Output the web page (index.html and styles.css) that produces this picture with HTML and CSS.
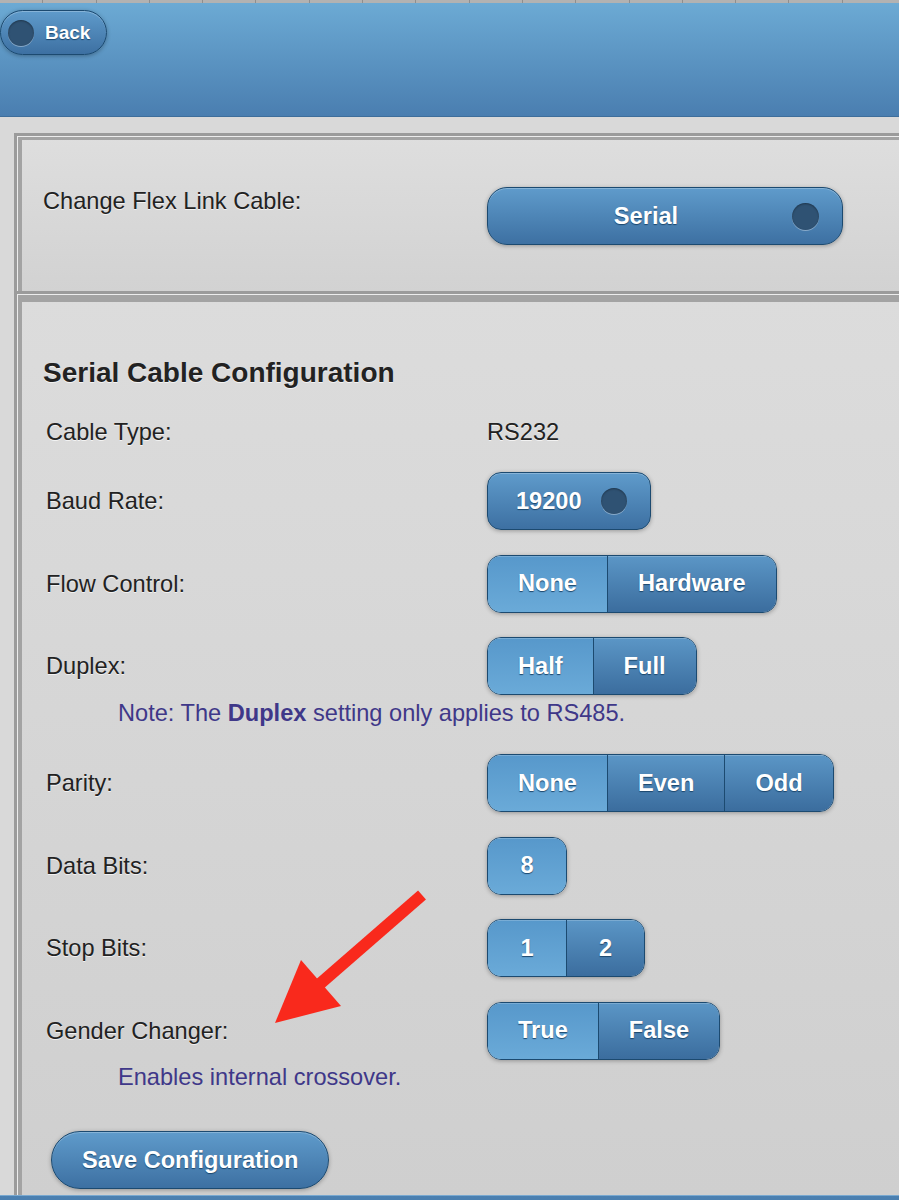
FILE: index.html
```html
<!DOCTYPE html>
<html>
<head>
<meta charset="utf-8">
<title>Serial Cable Configuration</title>
<link rel="stylesheet" href="styles.css">
</head>
<body>
<div class="tabstrip"></div>
<header class="topbar">
  <a class="btn back-btn"><span class="dot"></span><span>Back</span></a>
</header>
<main class="content">
  <section class="panel panel-cable">
    <div class="form-row">
      <span class="label">Change Flex Link Cable:</span>
      <a class="btn select-btn cable-select"><span class="select-text">Serial</span><span class="dot big"></span></a>
    </div>
  </section>
  <section class="panel panel-serial">
    <h2 class="cfg-title">Serial Cable Configuration</h2>
    <div class="field text-field"><span class="label">Cable Type:</span><span class="label">RS232</span></div>
    <div class="field baud-row"><span class="label">Baud Rate:</span><a class="btn select-btn baud-select"><span>19200</span><span class="dot"></span></a></div>
    <div class="field"><span class="label">Flow Control:</span><div class="seg"><span class="seg-item on">None</span><span class="seg-item">Hardware</span></div></div>
    <div class="field"><span class="label">Duplex:</span><div class="seg"><span class="seg-item on">Half</span><span class="seg-item">Full</span></div></div>
    <p class="note">Note: The <b>Duplex</b> setting only applies to RS485.</p>
    <div class="field after-note"><span class="label">Parity:</span><div class="seg"><span class="seg-item on">None</span><span class="seg-item">Even</span><span class="seg-item">Odd</span></div></div>
    <div class="field"><span class="label">Data Bits:</span><div class="seg"><span class="seg-item on">8</span></div></div>
    <div class="field"><span class="label">Stop Bits:</span><div class="seg"><span class="seg-item on">1</span><span class="seg-item">2</span></div></div>
    <div class="field"><span class="label">Gender Changer:</span><div class="seg"><span class="seg-item on">True</span><span class="seg-item">False</span></div></div>
    <p class="note">Enables internal crossover.</p>
    <a class="btn save-btn">Save Configuration</a>
  </section>
</main>
<footer class="footbar"></footer>
<svg class="arrow" width="170" height="145" viewBox="0 0 170 145">
  <line x1="160" y1="10" x2="52" y2="104" stroke="#f9291c" stroke-width="12"/>
  <polygon points="13,138 39,75 79,121" fill="#f9291c"/>
</svg>
</body>
</html>
```
FILE: styles.css
```css
* { box-sizing: border-box; }
html, body { margin: 0; padding: 0; }
body {
  width: 899px;
  height: 1200px;
  overflow: hidden;
  position: relative;
  background: #d9d9d9;
  font-family: "Liberation Sans", Arial, Helvetica, sans-serif;
  font-size: 23.6px;
  color: #222;
}

.tabstrip {
  height: 3px;
  background: repeating-linear-gradient(90deg, #b2b2b2 0 52.3px, #8e8e8e 52.3px 53.3px);
  background-position: -10px 0;
}

.topbar {
  height: 114px;
  padding-top: 7px;
  background: linear-gradient(#6caad4, #4a7eb0);
  border-bottom: 1px solid #3e6e9b;
}

.btn {
  display: inline-flex;
  align-items: center;
  color: #fff;
  font-weight: 700;
  text-decoration: none;
  text-shadow: 0 1px 1px #1b466c;
  border: 1px solid #1c4a70;
  background: linear-gradient(#5f9bcb, #3d70a2);
  box-shadow: inset 0 1px 0 rgba(255, 255, 255, .25), 0 1px 4px rgba(0, 0, 0, .3);
}

.dot {
  flex: none;
  width: 26px;
  height: 26px;
  border-radius: 50%;
  background: #2f5273;
  box-shadow: 0 1px 0 rgba(255, 255, 255, .35), inset 0 1px 2px rgba(0, 0, 0, .35);
}
.dot.big { width: 27px; height: 27px; }

.back-btn {
  height: 45px;
  border-radius: 23px;
  padding: 0 16px 0 7px;
  gap: 11px;
  font-size: 19px;
}

.content { padding: 16px 0 0 14px; }

.panel {
  border: 3px solid #9b9b9b;
  border-right: 0;
}

.panel-cable {
  padding: 51px 0 46px 26px;
  background: linear-gradient(#dedede, #d2d2d2);
  box-shadow: inset 1px 1px 0 #ececec, inset 5px 4px 0 #a3a3a3;
}

.panel-serial {
  border-top: 0;
  border-bottom: 0;
  height: 901px;
  padding: 62px 0 0 26px;
  background: linear-gradient(#dcdcdc, #cfcfcf);
  box-shadow: inset 1px 1px 0 #ececec, inset 5px 8px 0 #a3a3a3;
}

.form-row {
  display: grid;
  grid-template-columns: 444px auto;
  align-items: start;
}

.label {
  line-height: 28px;
  text-shadow: 0 1px 0 rgba(255, 255, 255, .7);
}

.cable-select {
  width: 356px;
  height: 58px;
  border-radius: 20px;
  padding: 0 23px 0 15px;
  gap: 3px;
}
.select-text { flex: 1; text-align: center; }

.cfg-title {
  margin: 0;
  font-size: 28px;
  line-height: 34px;
  font-weight: 700;
  color: #222;
  text-shadow: 0 1px 0 rgba(255, 255, 255, .7);
}

.field {
  display: grid;
  grid-template-columns: 441px auto;
  align-items: center;
  margin-left: 3px;
  height: 58px;
  margin-top: 24.5px;
}
.field > :last-child { justify-self: start; }
.text-field { height: 28px; margin-top: 28px; }
.baud-row { margin-top: 26px; }
.after-note { margin-top: 27.5px; }

.baud-select {
  height: 58px;
  border-radius: 14px;
  padding: 0 23px 0 28px;
  gap: 19px;
}

.seg {
  display: inline-flex;
  height: 58px;
  border: 1px solid #1c4a70;
  border-radius: 14px;
  overflow: hidden;
  box-shadow: 0 1px 4px rgba(0, 0, 0, .3);
}
.seg-item {
  display: flex;
  align-items: center;
  justify-content: center;
  min-width: 78px;
  padding: 0 30px;
  color: #fff;
  font-weight: 700;
  text-shadow: 0 1px 1px #1b466c;
  background: linear-gradient(#5b96c6, #3b6d9e);
  box-shadow: inset 0 1px 0 rgba(255, 255, 255, .2);
}
.seg-item + .seg-item { border-left: 1px solid #1c4a70; }
.seg-item.on { background: linear-gradient(#5798cb, #6aaad8); }

.note {
  margin: 3.5px 0 0 75px;
  line-height: 28px;
  color: #3f3889;
}
.note b { font-weight: 700; }

.save-btn {
  margin: 40px 0 0 8px;
  height: 58px;
  border-radius: 29px;
  padding: 0 30px;
}

.footbar {
  height: 40px;
  background: linear-gradient(#4b80b1, #3f71a0);
  border-top: 1px solid #78a8d0;
}

.arrow {
  position: absolute;
  left: 262px;
  top: 885px;
}
```
